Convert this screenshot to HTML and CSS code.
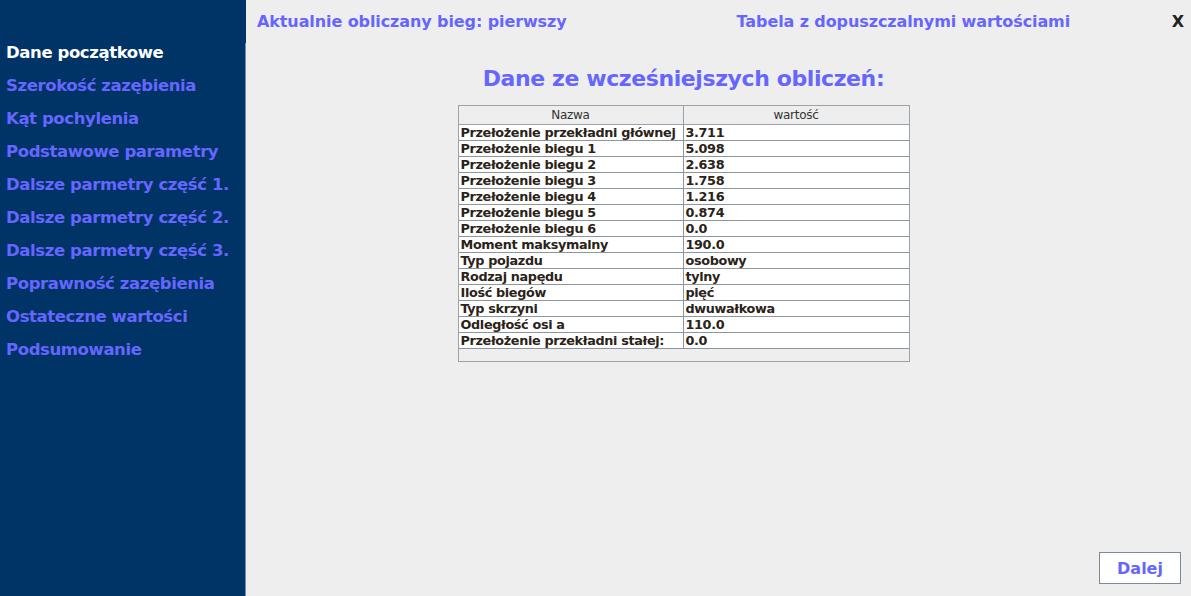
FILE: index.html
```html
<!DOCTYPE html>
<html lang="pl">
<head>
<meta charset="utf-8">
<title>Dane początkowe</title>
<link rel="stylesheet" href="styles.css">
</head>
<body>
<div class="app">
  <nav class="sidebar">
    <div class="nav-item active">Dane początkowe</div>
    <div class="nav-item">Szerokość zazębienia</div>
    <div class="nav-item">Kąt pochylenia</div>
    <div class="nav-item">Podstawowe parametry</div>
    <div class="nav-item">Dalsze parmetry część 1.</div>
    <div class="nav-item">Dalsze parmetry część 2.</div>
    <div class="nav-item">Dalsze parmetry część 3.</div>
    <div class="nav-item">Poprawność zazębienia</div>
    <div class="nav-item">Ostateczne wartości</div>
    <div class="nav-item">Podsumowanie</div>
  </nav>
  <main class="main">
    <header class="topbar">
      <div class="top-left">Aktualnie obliczany bieg: pierwszy</div>
      <div class="top-right">Tabela z dopuszczalnymi wartościami</div>
      <div class="close">X</div>
    </header>
    <section class="content">
      <h1 class="title">Dane ze wcześniejszych obliczeń:</h1>
      <div class="table-wrap">
        <table class="data">
          <thead>
            <tr><th>Nazwa</th><th>wartość</th></tr>
          </thead>
          <tbody>
            <tr><td>Przełożenie przekładni głównej</td><td>3.711</td></tr>
            <tr><td>Przełożenie biegu 1</td><td>5.098</td></tr>
            <tr><td>Przełożenie biegu 2</td><td>2.638</td></tr>
            <tr><td>Przełożenie biegu 3</td><td>1.758</td></tr>
            <tr><td>Przełożenie biegu 4</td><td>1.216</td></tr>
            <tr><td>Przełożenie biegu 5</td><td>0.874</td></tr>
            <tr><td>Przełożenie biegu 6</td><td>0.0</td></tr>
            <tr><td>Moment maksymalny</td><td>190.0</td></tr>
            <tr><td>Typ pojazdu</td><td>osobowy</td></tr>
            <tr><td>Rodzaj napędu</td><td>tylny</td></tr>
            <tr><td>Ilość biegów</td><td>pięć</td></tr>
            <tr><td>Typ skrzyni</td><td>dwuwałkowa</td></tr>
            <tr><td>Odległość osi a</td><td>110.0</td></tr>
            <tr><td>Przełożenie przekładni stałej:</td><td>0.0</td></tr>
          </tbody>
        </table>
      </div>
    </section>
    <footer class="footer">
      <button class="next">Dalej</button>
    </footer>
  </main>
</div>
</body>
</html>
```

FILE: styles.css
```css
html, body {
  margin: 0;
  padding: 0;
  height: 100%;
}
body {
  font-family: "DejaVu Sans", Verdana, sans-serif;
  background: #eeeeee;
}
.app {
  display: flex;
  height: 596px;
  width: 1191px;
}
.sidebar {
  width: 246px;
  flex: 0 0 246px;
  background: #003366;
  padding-top: 36px;
  box-sizing: border-box;
  border-right: 1px solid #003366;
  position: relative;
}
.sidebar::after {
  content: "";
  position: absolute;
  right: -1px;
  top: 43px;
  bottom: 0;
  width: 1px;
  background: #6f8fc0;
}
.nav-item {
  font-weight: bold;
  font-size: 16.5px;
  letter-spacing: -0.4px;
  color: #6666ff;
  height: 33px;
  line-height: 33px;
  padding-left: 6px;
  white-space: nowrap;
}
.nav-item.active {
  color: #ffffff;
}
.main {
  flex: 1;
  display: flex;
  flex-direction: column;
}
.topbar {
  display: flex;
  align-items: center;
  height: 42px;
  padding-left: 11px;
  padding-right: 7px;
}
.top-left, .top-right {
  font-weight: bold;
  font-size: 16px;
  letter-spacing: -0.1px;
  color: #6666ff;
  white-space: nowrap;
}
.top-right {
  margin-left: 170px;
}
.close {
  margin-left: auto;
  font-weight: bold;
  font-size: 16px;
  color: #222222;
}
.content {
  flex: 1;
  display: flex;
  flex-direction: column;
  align-items: center;
  padding-right: 70px;
}
.title {
  margin: 23px 0 12px 0;
  font-size: 22px;
  font-weight: bold;
  letter-spacing: -0.4px;
  color: #6666ff;
  line-height: 28px;
}
.table-wrap {
  width: 450px;
  height: 255px;
  border: 1px solid #9aa3ab;
  background: #eeeeee;
}
.data {
  width: 450px;
  border-collapse: collapse;
  table-layout: fixed;
}
.data th {
  font-weight: normal;
  color: #333333;
  background: #eeeeee;
  height: 18px;
  padding: 0;
  border-right: 1px solid #9aa3ab;
  border-bottom: 1px solid #9aa3ab;
  font-family: "DejaVu Sans", sans-serif;
  font-size: 12px;
  letter-spacing: -0.3px;
}
.data th:first-child {
  width: 224px;
}
.data td {
  background: #ffffff;
  color: #2b2218;
  font-weight: bold;
  height: 15px;
  line-height: 15px;
  padding: 0 0 0 2px;
  border-right: 1px solid #8c96a0;
  border-bottom: 1px solid #8c96a0;
  white-space: nowrap;
  overflow: hidden;
  letter-spacing: -0.35px;
  font-size: 12.8px;
}
.data td:last-child, .data th:last-child {
  border-right: none;
}
.footer {
  display: flex;
  justify-content: flex-end;
  padding: 0 10px 12px 0;
}
.next {
  width: 82px;
  height: 32px;
  background: #ffffff;
  border: 1px solid #7a8a99;
  font-family: "DejaVu Sans", Verdana, sans-serif;
  font-weight: bold;
  font-size: 16px;
  color: #6666ff;
  padding: 0;
}
```
